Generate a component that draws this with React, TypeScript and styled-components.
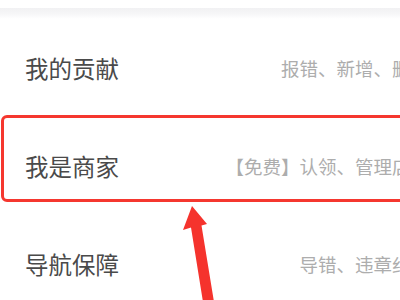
import React from "react";
import styled, { createGlobalStyle } from "styled-components";

const GlobalStyle = createGlobalStyle`
    html, body {
        margin: 0;
        padding: 0;
        background: #ffffff;
        overflow: hidden;
    }
    body {
        font-family: "Noto Sans CJK SC", "Noto Sans", sans-serif;
    }
`;

const Page = styled.div`
    position: relative;
    width: 400px;
    height: 300px;
    overflow: hidden;
    background: #fff;
`;

const TopGap = styled.div`
    height: 8px;
    background: #fff;
`;

const Divider = styled.div`
    height: 11px;
    background: linear-gradient(#f1f1f3, #f6f6f7 50%, #ffffff);
`;

const List = styled.div`
    width: 450px;
    display: flex;
    flex-direction: column;
`;

const Row = styled.div`
    height: 98px;
    display: flex;
    align-items: center;
    justify-content: space-between;
    padding: 0 21px 0 25px;
    box-sizing: border-box;
`;

const Title = styled.span`
    font-size: 23.5px;
    color: #4a4a4a;
    white-space: nowrap;
`;

const Desc = styled.span`
    font-size: 18.5px;
    color: #adadad;
    white-space: nowrap;
`;

const Highlight = styled.div`
    position: absolute;
    left: 1px;
    top: 115px;
    width: 420px;
    height: 87px;
    border: 3.5px solid #f5372f;
    border-radius: 6px;
    box-sizing: border-box;
    pointer-events: none;
`;

const Arrow = styled.svg`
    position: absolute;
    left: 0;
    top: 0;
    pointer-events: none;
`;

const items = [
    { title: "我的贡献", desc: "报错、新增、删除" },
    { title: "我是商家", desc: "【免费】认领、管理店铺" },
    { title: "导航保障", desc: "导错、违章纠错" },
];

const App: React.FC = () => {
    return (
        <Page>
            <GlobalStyle />
            <TopGap />
            <Divider />
            <List>
                {items.map((item) => (
                    <Row key={item.title}>
                        <Title>{item.title}</Title>
                        <Desc>{item.desc}</Desc>
                    </Row>
                ))}
            </List>
            <Highlight />
            <Arrow width="400" height="300" viewBox="0 0 400 300">
                <polygon
                    points="192,206 207,224 201.5,225.5 214,302 203,302 191,227.5 183,230"
                    fill="#f5332d"
                />
            </Arrow>
        </Page>
    );
};

export default App;
